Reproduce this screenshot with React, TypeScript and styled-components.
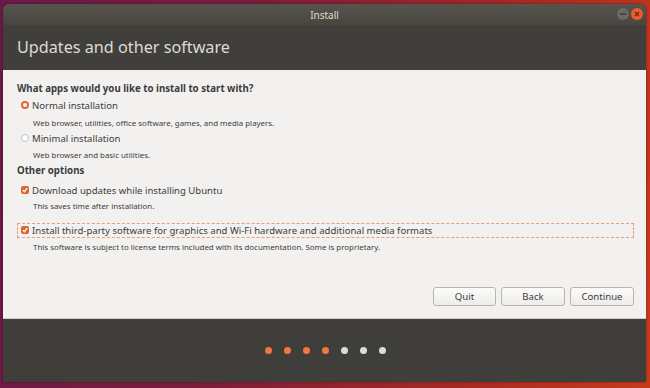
import React from "react";
import styled, { createGlobalStyle } from "styled-components";

const Global = createGlobalStyle`
  html, body { margin: 0; padding: 0; }
  body {
    width: 650px; height: 388px; overflow: hidden;
    background: linear-gradient(100deg, #6a1948 0%, #7a1c3c 35%, #a82a22 75%, #c63c1a 100%);
    font-family: "Noto Sans", "DejaVu Sans", sans-serif;
  }
`;

const Desktop = styled.div`
  width: 650px; height: 388px; box-sizing: border-box;
  padding: 4px 4px 6px 3px;
  display: flex;
`;

const Window = styled.div`
  flex: 1; display: flex; flex-direction: column;
  border-radius: 6px 6px 0 0; overflow: hidden;
  box-shadow: 0 0 2px rgba(0,0,0,0.5);
`;

const TitleBar = styled.div`
  height: 21px; position: relative;
  background: linear-gradient(#57544e, #48463f);
  display: flex; align-items: center; justify-content: center;
  color: #dfdbd2; font-size: 10px;
`;

const WinButtons = styled.div`
  position: absolute; right: 3px; top: 4px; display: flex; gap: 2px;
`;

const Circle = styled.div<{ $c: string }>`
  width: 12px; height: 12px; border-radius: 50%; background: ${p => p.$c};
  display: flex; align-items: center; justify-content: center;
`;

const Header = styled.div`
  height: 45px; background: #403f3b; color: #dfdbd2;
  font-size: 16.2px; padding: 0 0 0 14px; display: flex; align-items: center;
  padding-bottom: 2px; box-sizing: border-box;
`;

const Content = styled.div`
  height: 249px; background: #f2f1f0; box-sizing: border-box;
  padding: 12px 12px 0 14px; display: flex; flex-direction: column;
  border-bottom: 1px solid #cfcdca;
  color: #3c3c3c;
`;

const SectionTitle = styled.div`
  font-weight: bold; font-size: 9.7px; height: 14px; line-height: 14px;
  color: #3c3c3c;
`;

const OptionRow = styled.div<{ $focus?: boolean }>`
  display: flex; align-items: center; gap: 3px; height: 15px;
  padding-left: 3px; box-sizing: border-box;
  font-size: 9.55px; color: #3c3c3c;
  border: 1px dashed ${p => (p.$focus ? "#eb9a7c" : "transparent")};
`;

const Sub = styled.div`
  font-size: 7.9px; color: #3c3c3c; padding-left: 16px; height: 12px; line-height: 12px;
`;

const Radio = styled.div<{ $on?: boolean }>`
  width: 8px; height: 8px; border-radius: 50%; box-sizing: border-box;
  border: ${p => (p.$on ? "2.5px solid #e3663a" : "1px solid #c2bfbb")};
  background: ${p => (p.$on ? "#ffffff" : "#fdfdfd")};
`;

const Check = styled.div`
  width: 8px; height: 8px; border-radius: 2px; background: #dd6333;
  display: flex; align-items: center; justify-content: center;
`;

const Spacer = styled.div<{ $h: number }>`
  height: ${p => p.$h}px; flex: none;
`;

const Buttons = styled.div`
  display: flex; justify-content: flex-end; gap: 5px; margin-top: auto; margin-bottom: 12px;
`;

const Btn = styled.button<{ $w: number }>`
  width: ${p => p.$w}px; height: 19px; box-sizing: border-box;
  border: 1px solid #bab5ab; border-radius: 3px;
  background: linear-gradient(#fbfbfa, #eeecea);
  font-family: "Noto Sans", sans-serif; font-size: 9.6px; color: #3c3c3c;
  padding: 0;
`;

const Footer = styled.div`
  flex: 1; background: #3f3e3a; display: flex; justify-content: center; align-items: center; gap: 12px;
  padding-left: 2px;
`;

const Dot = styled.div<{ $on: boolean }>`
  width: 7px; height: 7px; border-radius: 50%; background: ${p => (p.$on ? "#f07842" : "#dcdcdc")};
`;

const Tick = () => (
  <svg width="6" height="6" viewBox="0 0 8 8">
    <path d="M1 4.2L3.2 6.3L7 1.6" stroke="#fff" strokeWidth="1.7" fill="none" />
  </svg>
);

export default function App() {
  return (
    <>
      <Global />
      <Desktop>
        <Window>
          <TitleBar>
            Install
            <WinButtons>
              <Circle $c="#6c6a66">
                <svg width="8" height="8" viewBox="0 0 8 8"><rect x="1" y="3.3" width="6" height="1.4" fill="#3c3b37" /></svg>
              </Circle>
              <Circle $c="#ea5d2c">
                <svg width="8" height="8" viewBox="0 0 8 8"><path d="M2 2L6 6M6 2L2 6" stroke="#6b2a14" strokeWidth="1.3" /></svg>
              </Circle>
            </WinButtons>
          </TitleBar>
          <Header>Updates and other software</Header>
          <Content>
            <SectionTitle>What apps would you like to install to start with?</SectionTitle>
            <Spacer $h={1.5} />
            <OptionRow><Radio $on />Normal installation</OptionRow>
            <Spacer $h={4.5} />
            <Sub>Web browser, utilities, office software, games, and media players.</Sub>
            <Spacer $h={1.5} />
            <OptionRow><Radio />Minimal installation</OptionRow>
            <Spacer $h={3.5} />
            <Sub>Web browser and basic utilities.</Sub>
            <Spacer $h={3} />
            <SectionTitle>Other options</SectionTitle>
            <Spacer $h={4.5} />
            <OptionRow><Check><Tick /></Check>Download updates while installing Ubuntu</OptionRow>
            <Spacer $h={2.5} />
            <Sub>This saves time after installation.</Sub>
            <Spacer $h={10.5} />
            <OptionRow $focus>
              <Check><Tick /></Check>
              Install third-party software for graphics and Wi-Fi hardware and additional media formats
            </OptionRow>
            <Spacer $h={3.5} />
            <Sub>This software is subject to license terms included with its documentation. Some is proprietary.</Sub>
            <Buttons>
              <Btn $w={63}>Quit</Btn>
              <Btn $w={64}>Back</Btn>
              <Btn $w={64}>Continue</Btn>
            </Buttons>
          </Content>
          <Footer>
            {[1, 1, 1, 1, 0, 0, 0].map((v, i) => <Dot key={i} $on={!!v} />)}
          </Footer>
        </Window>
      </Desktop>
    </>
  );
}
